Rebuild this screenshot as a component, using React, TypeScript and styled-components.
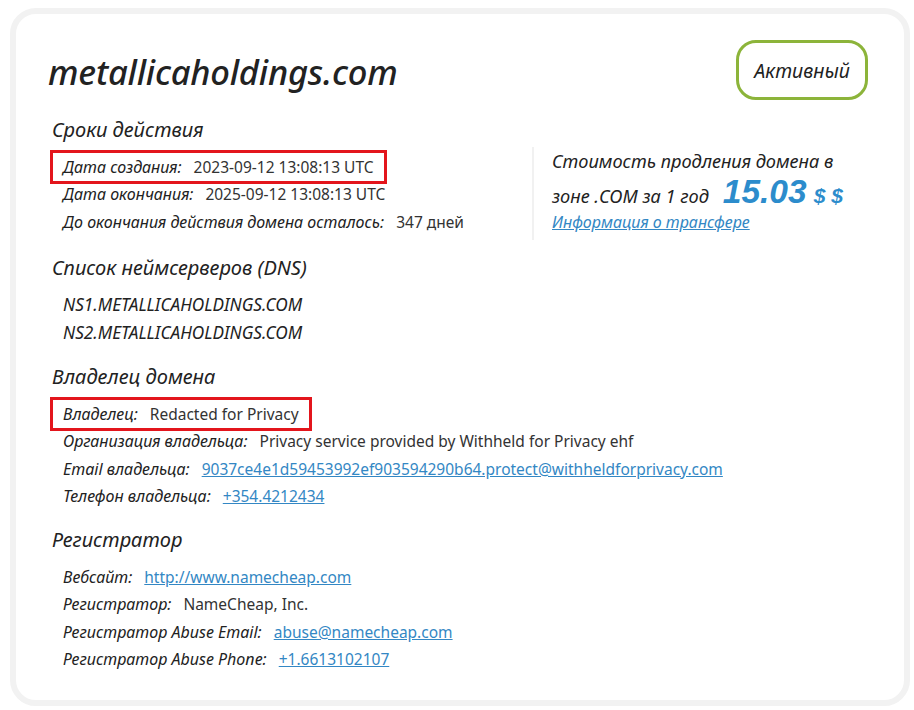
import React from 'react';
import styled, { createGlobalStyle } from 'styled-components';

const GlobalStyle = createGlobalStyle`
  html, body {
    margin: 0;
    padding: 0;
    background: #ffffff;
  }
  body {
    font-family: "Noto Sans", "Open Sans", sans-serif;
    color: #222222;
  }
`;

const blue = '#3387c4';

const Card = styled.div`
  box-sizing: border-box;
  margin: 8px 0 0 10px;
  width: 900px;
  height: 698px;
  border: 6px solid #f2f2f2;
  border-radius: 26px;
  padding: 26px 36px 0 36px;
  background: #ffffff;
`;

const Header = styled.div`
  display: flex;
  align-items: center;
  justify-content: space-between;
  height: 60px;
`;

const DomainTitle = styled.h1`
  margin: 4px 0 0 -4px;
  font-size: 34.5px;
  line-height: 44px;
  font-style: italic;
  font-weight: 500;
  color: #222;
  letter-spacing: -0.2px;
`;

const StatusBadge = styled.div`
  box-sizing: border-box;
  width: 132px;
  height: 60px;
  display: flex;
  align-items: center;
  justify-content: center;
  border: 3px solid #8cb43a;
  border-radius: 20px;
  font-size: 19.5px;
  font-style: italic;
  color: #222;
`;

const Section = styled.section<{ $gap?: number }>`
  margin-top: ${p => p.$gap ?? 17}px;
`;

const SectionTitle = styled.h2`
  margin: 0 0 9px 0;
  font-size: 20px;
  line-height: 28px;
  font-style: italic;
  font-weight: 400;
  color: #222;
`;

const TopRow = styled.div`
  display: flex;
  align-items: flex-start;
  margin-top: 16px;
`;

const LeftColumn = styled.div`
  width: 480px;
`;

const Rows = styled.div`
  display: flex;
  flex-direction: column;
  align-items: flex-start;
  margin-left: 1px;
`;

const Row = styled.div<{ $marked?: boolean }>`
  display: flex;
  align-items: center;
  height: 27.5px;
  padding: 0 10px 0 10px;
  font-size: 15.5px;
  white-space: nowrap;
  outline: ${p => (p.$marked ? '3px solid #e3151c' : 'none')};
  outline-offset: 0;
`;

const Label = styled.span<{ $caps?: boolean }>`
  font-style: italic;
  font-size: ${p => (p.$caps ? 17.2 : 16)}px;
  color: #222;
  margin-right: ${p => (p.$caps ? 0 : 12)}px;
`;

const Value = styled.span`
  color: #333;
`;

const ValueLink = styled.a`
  color: ${blue};
  text-decoration: underline;
`;

const PriceBox = styled.div`
  box-sizing: border-box;
  margin-top: 31px;
  height: 93px;
  border-left: 2px solid #f1f1f1;
  padding: 1px 0 0 18px;
`;

const PriceLine = styled.div`
  font-size: 18.2px;
  font-style: italic;
  line-height: 26px;
  white-space: nowrap;
`;

const PriceLineBig = styled(PriceLine)`
  line-height: 36px;
  display: flex;
  align-items: baseline;
`;

const PriceNumber = styled.span`
  font-family: "Liberation Sans", Arial, sans-serif;
  font-size: 33.5px;
  font-weight: 700;
  font-style: italic;
  color: #2c8ccc;
  margin-left: 14px;
`;

const Currency = styled.span`
  font-family: "Liberation Sans", Arial, sans-serif;
  font-size: 21px;
  font-weight: 700;
  font-style: italic;
  color: #2c8ccc;
  margin-left: 7px;
`;

const TransferLink = styled.a`
  display: block;
  margin-top: -5px;
  font-size: 16px;
  line-height: 26px;
  font-style: italic;
  color: ${blue};
  text-decoration: underline;
`;

type Item = { label?: string; value: string; href?: string; marked?: boolean };

const RowList: React.FC<{ items: Item[] }> = ({ items }) => (
  <Rows>
    {items.map((it, i) => (
      <Row key={i} $marked={it.marked}>
        {it.label && <Label>{it.label}</Label>}
        {it.href ? (
          <ValueLink href={it.href}>{it.value}</ValueLink>
        ) : it.label ? (
          <Value>{it.value}</Value>
        ) : (
          <Label $caps>{it.value}</Label>
        )}
      </Row>
    ))}
  </Rows>
);

const dates: Item[] = [
  { label: 'Дата создания:', value: '2023-09-12 13:08:13 UTC', marked: true },
  { label: 'Дата окончания:', value: '2025-09-12 13:08:13 UTC' },
  { label: 'До окончания действия домена осталось:', value: '347 дней' },
];

const dns: Item[] = [
  { value: 'NS1.METALLICAHOLDINGS.COM' },
  { value: 'NS2.METALLICAHOLDINGS.COM' },
];

const owner: Item[] = [
  { label: 'Владелец:', value: 'Redacted for Privacy', marked: true },
  { label: 'Организация владельца:', value: 'Privacy service provided by Withheld for Privacy ehf' },
  {
    label: 'Email владельца:',
    value: '9037ce4e1d59453992ef903594290b64.protect@withheldforprivacy.com',
    href: 'mailto:9037ce4e1d59453992ef903594290b64.protect@withheldforprivacy.com',
  },
  { label: 'Телефон владельца:', value: '+354.4212434', href: 'tel:+354.4212434' },
];

const registrar: Item[] = [
  { label: 'Вебсайт:', value: 'http://www.namecheap.com', href: 'http://www.namecheap.com' },
  { label: 'Регистратор:', value: 'NameCheap, Inc.' },
  { label: 'Регистратор Abuse Email:', value: 'abuse@namecheap.com', href: 'mailto:abuse@namecheap.com' },
  { label: 'Регистратор Abuse Phone:', value: '+1.6613102107', href: 'tel:+1.6613102107' },
];

export default function App() {
  return (
    <>
      <GlobalStyle />
      <Card>
        <Header>
          <DomainTitle>metallicaholdings.com</DomainTitle>
          <StatusBadge>Активный</StatusBadge>
        </Header>

        <TopRow>
          <LeftColumn>
            <SectionTitle>Сроки действия</SectionTitle>
            <RowList items={dates} />
          </LeftColumn>
          <PriceBox>
            <PriceLine>Стоимость продления домена в</PriceLine>
            <PriceLineBig>
              зоне .COM за 1 год
              <PriceNumber>15.03</PriceNumber>
              <Currency>$ $</Currency>
            </PriceLineBig>
            <TransferLink href="#">Информация о трансфере</TransferLink>
          </PriceBox>
        </TopRow>

        <Section $gap={14}>
          <SectionTitle>Список неймсерверов (DNS)</SectionTitle>
          <RowList items={dns} />
        </Section>

        <Section>
          <SectionTitle>Владелец домена</SectionTitle>
          <RowList items={owner} />
        </Section>

        <Section $gap={16}>
          <SectionTitle>Регистратор</SectionTitle>
          <RowList items={registrar} />
        </Section>
      </Card>
    </>
  );
}
